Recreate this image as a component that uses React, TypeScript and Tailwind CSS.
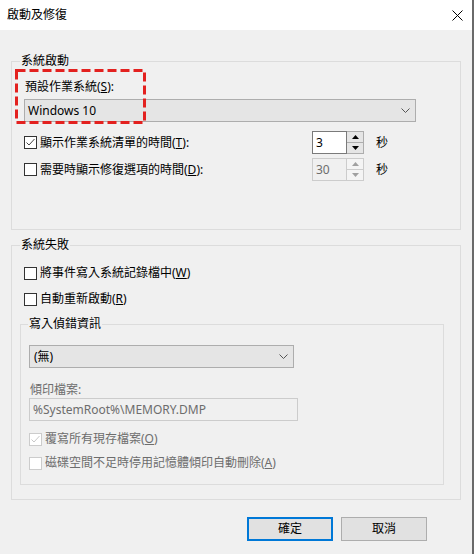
import React from "react"

function Check({ checked, disabled }: { checked?: boolean; disabled?: boolean }) {
    return (
        <span className={`w-[13px] h-[13px] shrink-0 border bg-white flex items-center justify-center ${disabled ? "border-[#cccccc]" : "border-[#333333]"}`}>
            {checked && (
                <svg width="11" height="11" viewBox="0 0 11 11">
                    <path d="M1.5 5.5 L4 8 L9.5 2" fill="none" stroke={disabled ? "#c8c8c8" : "#444444"} strokeWidth="1" />
                </svg>
            )}
        </span>
    )
}

function CheckRow({ children, checked, disabled, className = "" }: { children: React.ReactNode; checked?: boolean; disabled?: boolean; className?: string }) {
    return (
        <div className={`flex items-center gap-[3px] h-[16px] ${disabled ? "text-[#6d6d6d]" : ""} ${className}`}>
            <Check checked={checked} disabled={disabled} />
            <span className="whitespace-nowrap">{children}</span>
        </div>
    )
}

function Chevron() {
    return (
        <svg width="9" height="5" viewBox="0 0 9 5" className="ml-auto mr-[5px]">
            <path d="M0.5 0.5 L4.5 4.5 L8.5 0.5" fill="none" stroke="#555555" strokeWidth="1" />
        </svg>
    )
}

function Spinner({ value, disabled }: { value: string; disabled?: boolean }) {
    const arrow = disabled ? "#a0a0a0" : "#000000"
    return (
        <div className="flex h-[23px] w-[52px]">
            <div className={`w-[35px] h-full border pl-[3px] flex items-center ${disabled ? "border-[#cccccc] bg-[#f0f0f0] text-[#6d6d6d]" : "border-[#7a7a7a] bg-white"}`}>
                {value}
            </div>
            <div className={`w-[17px] h-full flex flex-col border ${disabled ? "border-[#cccccc]" : "border-[#adadad]"} border-l-0`}>
                <div className={`flex-1 flex items-center justify-center border-b ${disabled ? "bg-[#f4f4f4] border-[#cccccc]" : "bg-[#e5e5e5] border-[#adadad]"}`}>
                    <svg width="7" height="4" viewBox="0 0 7 4"><polygon points="0,4 7,4 3.5,0" fill={arrow} /></svg>
                </div>
                <div className={`flex-1 flex items-center justify-center ${disabled ? "bg-[#f4f4f4]" : "bg-[#e5e5e5]"}`}>
                    <svg width="7" height="4" viewBox="0 0 7 4"><polygon points="0,0 7,0 3.5,4" fill={arrow} /></svg>
                </div>
            </div>
        </div>
    )
}

function Legend({ children, className = "" }: { children: React.ReactNode; className?: string }) {
    return <div className={`-mt-[9px] w-fit px-[1px] bg-[#f0f0f0] leading-[16px] whitespace-nowrap ${className}`}>{children}</div>
}

export default function App() {
    return (
        <div className="relative w-[474px] h-[554px] bg-[#f0f0f0] border-r-2 border-[#6a6a6a] flex flex-col text-[12px] leading-[16px] text-black font-['Segoe_UI','Noto_Sans','Noto_Sans_CJK_TC',sans-serif]">
            {/* title bar */}
            <div className="h-[30px] bg-white flex items-center pl-[7px] shrink-0">
                <span>啟動及修復</span>
                <svg width="11" height="11" viewBox="0 0 11 11" className="ml-auto mr-[9px]">
                    <path d="M0.5 0.5 L10.5 10.5 M10.5 0.5 L0.5 10.5" stroke="#000" strokeWidth="1" />
                </svg>
            </div>

            {/* 系統啟動 */}
            <div className="mt-[31px] ml-[11px] w-[450px] h-[169px] border border-[#dcdcdc] shrink-0">
                <Legend className="ml-[8px]">系統啟動</Legend>
                <div className="px-[12px]">
                    <div className="mt-[10px] ml-[1px]">預設作業系統(<span className="underline">S</span>):</div>
                    <div className="mt-[4px] h-[23px] w-[392px] border border-[#adadad] bg-[#e5e5e5] flex items-center pl-[3px]">
                        <span>Windows 10</span>
                        <Chevron />
                    </div>
                    <div className="mt-[9px] h-[23px] flex items-center">
                        <div className="w-[288px]"><CheckRow checked>顯示作業系統清單的時間(<span className="underline">T</span>):</CheckRow></div>
                        <Spinner value="3" />
                        <span className="ml-[12px]">秒</span>
                    </div>
                    <div className="mt-[4px] h-[23px] flex items-center">
                        <div className="w-[288px]"><CheckRow>需要時顯示修復選項的時間(<span className="underline">D</span>):</CheckRow></div>
                        <Spinner value="30" disabled />
                        <span className="ml-[12px]">秒</span>
                    </div>
                </div>
            </div>

            {/* 系統失敗 */}
            <div className="mt-[15px] ml-[11px] w-[450px] h-[255px] border border-[#dcdcdc] shrink-0">
                <Legend className="ml-[8px]">系統失敗</Legend>
                <div className="pl-[8px]">
                    <CheckRow className="mt-[12px] ml-[4px]">將事件寫入系統記錄檔中(<span className="underline">W</span>)</CheckRow>
                    <CheckRow className="mt-[10px] ml-[4px]">自動重新啟動(<span className="underline">R</span>)</CheckRow>

                    <div className="mt-[17px] w-[424px] h-[161px] border border-[#dcdcdc]">
                        <Legend className="ml-[7px]">寫入偵錯資訊</Legend>
                        <div className="pl-[8px]">
                            <div className="mt-[13px] h-[23px] w-[265px] border border-[#adadad] bg-[#e5e5e5] flex items-center pl-[4px]">
                                <span>(無)</span>
                                <Chevron />
                            </div>
                            <div className="mt-[14px] ml-[1px] text-[#6d6d6d]">傾印檔案:</div>
                            <div className="h-[23px] w-[269px] border border-[#cccccc] bg-[#f0f0f0] flex items-center pl-[3px] text-[#6d6d6d]">
                                %SystemRoot%\MEMORY.DMP
                            </div>
                            <CheckRow className="mt-[10px]" checked disabled>覆寫所有現存檔案(<span className="underline">O</span>)</CheckRow>
                            <CheckRow className="mt-[8px]" disabled>磁碟空間不足時停用記憶體傾印自動刪除(<span className="underline">A</span>)</CheckRow>
                        </div>
                    </div>
                </div>
            </div>

            {/* buttons */}
            <div className="mt-[17px] ml-[247px] flex gap-[8px]">
                <button className="w-[86px] h-[24px] border-2 border-[#0078d7] bg-[#e1e1e1] flex items-center justify-center">確定</button>
                <button className="w-[86px] h-[24px] border border-[#adadad] bg-[#e1e1e1] flex items-center justify-center">取消</button>
            </div>

            {/* red dashed annotation */}
            <svg width="131" height="55" className="absolute left-[15px] top-[69px]">
                <rect x="1.5" y="1.5" width="128" height="52" fill="none" stroke="#e3211f" strokeWidth="3" strokeDasharray="9 4" />
            </svg>
        </div>
    )
}
